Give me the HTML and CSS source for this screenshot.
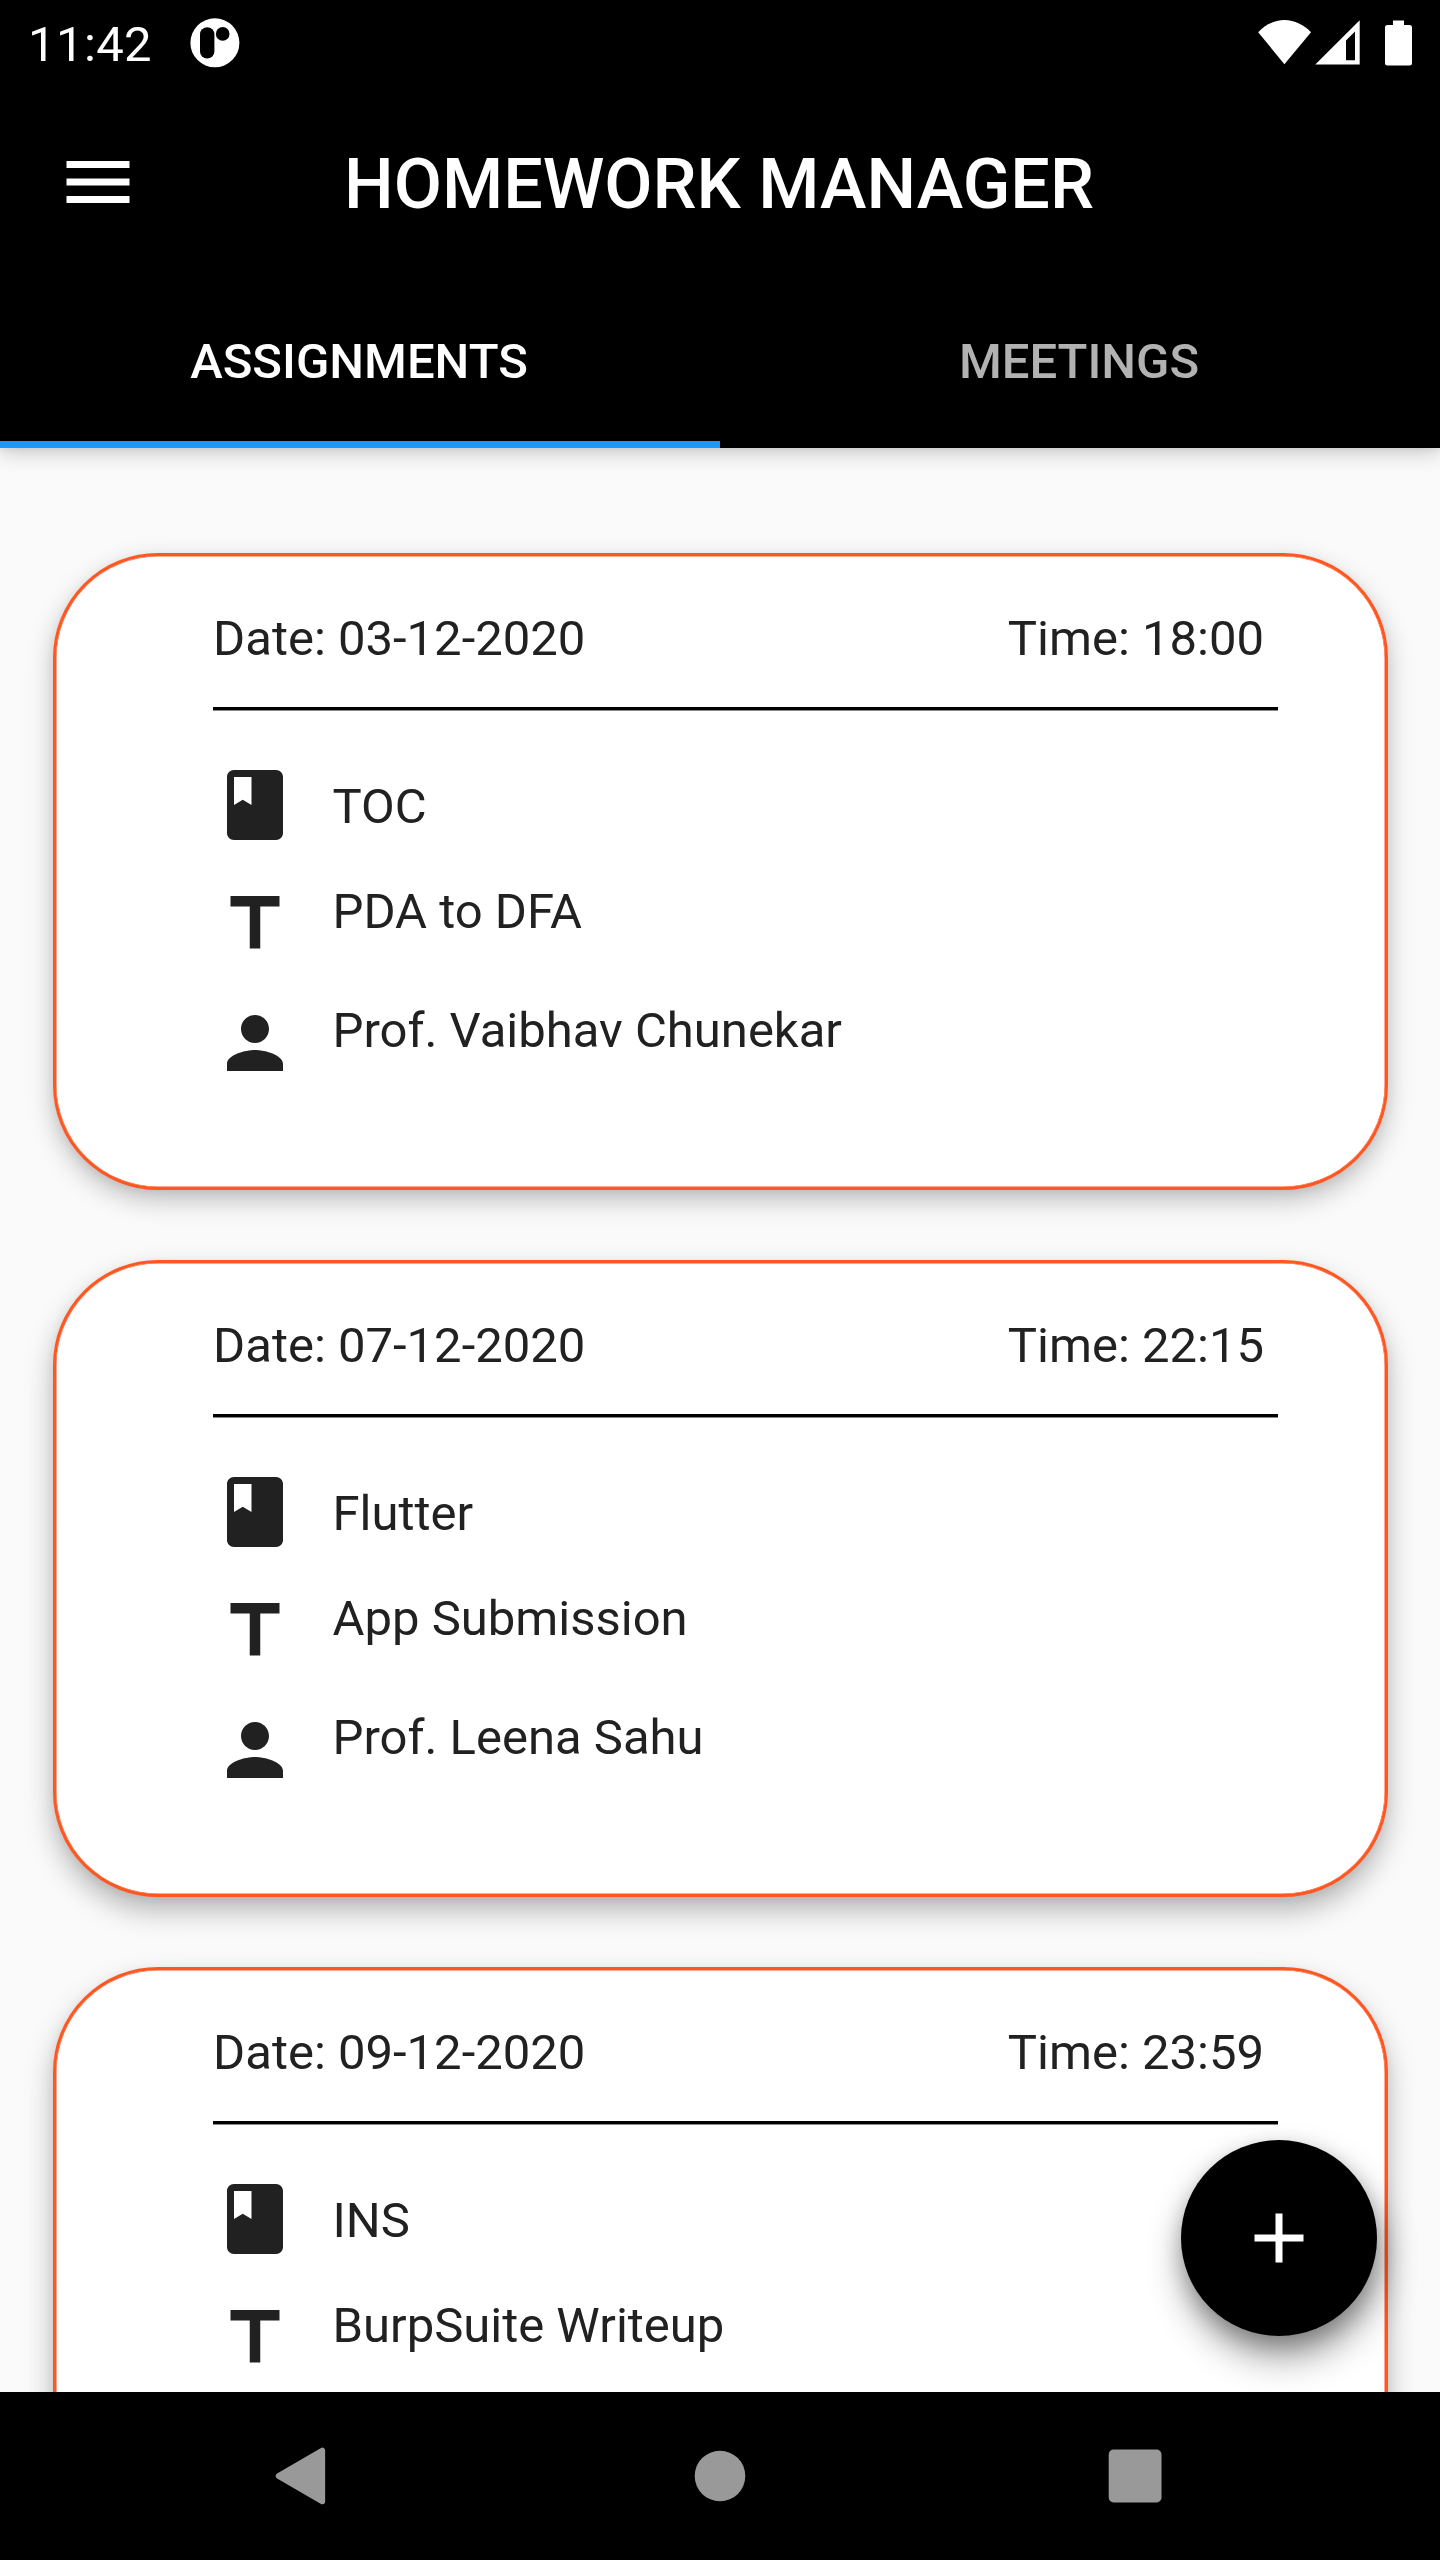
FILE: index.html
```html
<!DOCTYPE html>
<html lang="en">
<head>
<meta charset="utf-8">
<title>Homework Manager</title>
<link rel="stylesheet" href="styles.css">
</head>
<body>
<svg width="0" height="0" class="sprite">
  <symbol id="book" viewBox="0 0 24 24"><path d="M18 2H6c-1.1 0-2 .9-2 2v16c0 1.100.9 2 2 2h12c1.100 0 2-.9 2-2V4c0-1.100-.9-2-2-2zM6 4h5v8l-2.500-1.500L6 12V4z"/></symbol>
  <symbol id="title" viewBox="0 0 24 24"><path d="M5 4v3h5.500v12h3V7H19V4z"/></symbol>
  <symbol id="person" viewBox="0 0 24 24"><path d="M12 12c2.210 0 4-1.790 4-4s-1.790-4-4-4-4 1.790-4 4 1.790 4 4 4zm0 2c-2.670 0-8 1.340-8 4v2h16v-2c0-2.660-5.330-4-8-4z"/></symbol>
</svg>
<div class="screen">
  <header class="header">
    <div class="status-bar">
      <span class="clock">11:42</span>
      <svg class="app-badge" width="50" height="50" viewBox="190.500 17.500 50 50">
        <circle cx="215.400" cy="42.300" r="24.500" fill="#fff"/>
        <rect x="200.500" y="26.700" width="14.400" height="31.400" rx="7.200"/>
        <circle cx="223.200" cy="33.400" r="6.800"/>
      </svg>
      <svg class="status-icons" width="160" height="50" viewBox="1256 17 160 50" fill="#fff">
        <path d="M1284.400 63.300L1258.200 31.200C1265 24 1274 19 1284.400 19S1304 24 1311 31.200Z"/>
        <path fill-rule="evenodd" d="M1315.300 63.600L1359.700 19.300V63.600ZM1346 39.600V59.300H1355V30.600Z"/>
        <path d="M1393 19.500h11v4.500h5.500a2.500 2.500 0 0 1 2.500 2.500v35.600a2.500 2.500 0 0 1-2.500 2.500h-22a2.500 2.500 0 0 1-2.500-2.500v-35.600a2.500 2.500 0 0 1 2.500-2.500h5.500z"/>
      </svg>
    </div>
    <div class="app-bar">
      <svg class="menu" viewBox="0 0 24 24"><path d="M3 18h18v-2H3v2zm0-5h18v-2H3v2zm0-7v2h18V6H3z"/></svg>
      <h1 class="app-title">HOMEWORK MANAGER</h1>
    </div>
    <nav class="tabs">
      <div class="tab tab-active">ASSIGNMENTS</div>
      <div class="tab">MEETINGS</div>
    </nav>
  </header>
  <main class="list">
    <article class="card">
      <div class="when"><span>Date: 03-12-2020</span><span>Time: 18:00</span></div>
      <div class="row"><svg class="icon"><use href="#book"/></svg><span class="subject">TOC</span></div>
      <div class="row"><svg class="icon"><use href="#title"/></svg><span class="detail">PDA to DFA</span></div>
      <div class="row"><svg class="icon"><use href="#person"/></svg><span class="detail">Prof. Vaibhav Chunekar</span></div>
    </article>
    <article class="card card-lower">
      <div class="when"><span>Date: 07-12-2020</span><span>Time: 22:15</span></div>
      <div class="row"><svg class="icon"><use href="#book"/></svg><span class="subject">Flutter</span></div>
      <div class="row"><svg class="icon"><use href="#title"/></svg><span class="detail">App Submission</span></div>
      <div class="row"><svg class="icon"><use href="#person"/></svg><span class="detail">Prof. Leena Sahu</span></div>
    </article>
    <article class="card card-lower">
      <div class="when"><span>Date: 09-12-2020</span><span>Time: 23:59</span></div>
      <div class="row"><svg class="icon"><use href="#book"/></svg><span class="subject">INS</span></div>
      <div class="row"><svg class="icon"><use href="#title"/></svg><span class="detail">BurpSuite Writeup</span></div>
    </article>
    <div class="fab"><svg class="icon-add" viewBox="0 0 24 24"><path d="M19 13h-6v6h-2v-6H5v-2h6V5h2v6h6v2z"/></svg></div>
  </main>
  <footer class="nav-bar">
    <svg width="420" height="168" viewBox="90 2392 420 168"><path d="M278.500 2476L322.400 2450.500V2501.500Z" stroke="#999" stroke-width="5.500" stroke-linejoin="round"/></svg>
    <svg width="420" height="168" viewBox="510 2392 420 168"><circle cx="720" cy="2476" r="25.300"/></svg>
    <svg width="420" height="168" viewBox="930 2392 420 168"><rect x="1108.700" y="2449.500" width="52.800" height="53" rx="5"/></svg>
  </footer>
</div>
</body>
</html>
```
FILE: styles.css
```css
* { box-sizing: border-box; }
body {
  margin: 0;
  font-family: Roboto, "Liberation Sans", sans-serif;
  font-size: 49px;
  line-height: 57px;
  color: #212121;
  background: #fafafa;
}
.sprite { display: none; }
svg { display: block; flex: none; }
.screen {
  display: flex;
  flex-direction: column;
  width: 1440px;
  height: 2560px;
}
.header {
  position: relative;
  z-index: 1;
  height: 448px;
  background: #000;
  color: #fff;
  box-shadow: 0 6px 18px rgba(0, 0, 0, .18), 0 2px 6px rgba(0, 0, 0, .05);
}
.status-bar {
  display: flex;
  align-items: center;
  height: 84px;
  padding: 1px 24px 0 28px;
}
.clock { width: 162px; padding-top: 3px; letter-spacing: .4px; }
.status-icons { margin-left: auto; }
.app-bar {
  display: grid;
  grid-template-columns: 84px 1fr 84px;
  align-items: center;
  height: 196px;
  padding: 0 56px;
}
.menu { width: 84px; height: 84px; fill: #fff; }
.app-title {
  margin: 0;
  padding: 3px 2px 0 0;
  font-size: 70px;
  line-height: 82px;
  font-weight: 500;
  text-align: center;
  white-space: nowrap;
}
.tabs { display: grid; grid-template-columns: 1fr 1fr; height: 168px; }
.tab {
  display: flex;
  align-items: center;
  justify-content: center;
  padding: 2px 2px 0 0;
  border-bottom: 7px solid transparent;
  font-weight: 500;
  color: #b2b2b2;
}
.tab-active { color: #fff; border-color: #2196f3; }
.list {
  position: relative;
  display: flex;
  flex-direction: column;
  gap: 70px;
  height: 1944px;
  padding: 105px 52.500px 0;
  overflow: hidden;
}
.card {
  flex: none;
  height: 637px;
  padding: 52px 107px 0 157.600px;
  border: 3px solid #ff5722;
  border-radius: 105px;
  background: #fff;
  box-shadow: inset 0 0 0 .5px #ff5722, 0 10px 26px rgba(0, 0, 0, .24), 0 3px 10px rgba(0, 0, 0, .06);
}
.card-lower {
  box-shadow: inset 0 0 0 .5px #ff5722, 0 14px 28px rgba(0, 0, 0, .27), 0 3px 10px rgba(0, 0, 0, .06);
}
.when {
  display: flex;
  justify-content: space-between;
  height: 102px;
  padding: 2px 13.500px 0 0;
  border-bottom: 3px solid #000;
  box-shadow: 0 1px 0 #888;
  margin-bottom: 35.500px;
}
.row { display: flex; align-items: center; gap: 35.400px; height: 119px; }
.row .icon { width: 84px; height: 84px; fill: #212121; }
.subject { padding-top: 3px; }
.detail { margin-bottom: 25px; }
.fab {
  position: absolute;
  right: 63px;
  bottom: 56px;
  display: flex;
  align-items: center;
  justify-content: center;
  width: 196px;
  height: 196px;
  border-radius: 50%;
  background: #000;
  box-shadow: 3px 20px 36px rgba(0, 0, 0, .42), 1px 8px 20px rgba(0, 0, 0, .2);
}
.icon-add { width: 84px; height: 84px; fill: #fff; }
.nav-bar {
  display: flex;
  justify-content: center;
  height: 168px;
  background: #000;
  fill: #999;
}
```
